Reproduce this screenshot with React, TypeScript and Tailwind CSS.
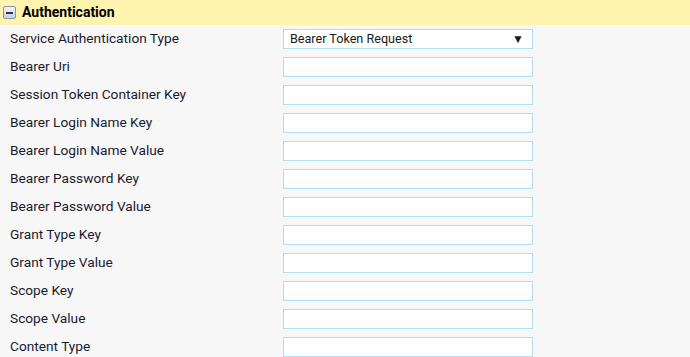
import React from 'react';

const fields = [
  'Bearer Uri',
  'Session Token Container Key',
  'Bearer Login Name Key',
  'Bearer Login Name Value',
  'Bearer Password Key',
  'Bearer Password Value',
  'Grant Type Key',
  'Grant Type Value',
  'Scope Key',
  'Scope Value',
  'Content Type',
];

const Row: React.FC<{ label: string; children: React.ReactNode }> = ({ label, children }) => (
  <div className="flex items-center h-[28px]">
    <div className="w-[283px] pl-[10px] pb-[2px] text-[13.7px] text-[#1a1a2e]">{label}</div>
    {children}
  </div>
);

export default function App() {
  return (
    <div
      className="w-[690px] h-[357px] overflow-hidden bg-[#f7f7f7]"
      style={{ fontFamily: 'Roboto, "Liberation Sans", sans-serif' }}
    >
      {/* section header */}
      <div className="h-[25px] bg-[#fff3b0] flex items-center pl-[3px]">
        <div className="w-[13px] h-[13px] border border-[#8a94a6] rounded-[2px] bg-gradient-to-b from-[#f4f6fa] to-[#c9d0dc] flex items-center justify-center">
          <div className="w-[7px] h-[2px] bg-[#2b3550]" />
        </div>
        <span className="ml-[6px] text-[14px] font-bold text-black">Authentication</span>
      </div>

      <Row label="Service Authentication Type">
        <div className="w-[250px] h-[20px] bg-white border border-[#b3dcf5] flex items-center justify-between pl-[6px] pr-[8px] text-[12.6px] text-[#1a1a1a]">
          <span>Bearer Token Request</span>
          <span className="text-[12px] leading-none">▼</span>
        </div>
      </Row>

      {fields.map((f) => (
        <Row key={f} label={f}>
          <input className="w-[250px] h-[20px] bg-white border border-[#b3dcf5] outline-none" />
        </Row>
      ))}
    </div>
  );
}
